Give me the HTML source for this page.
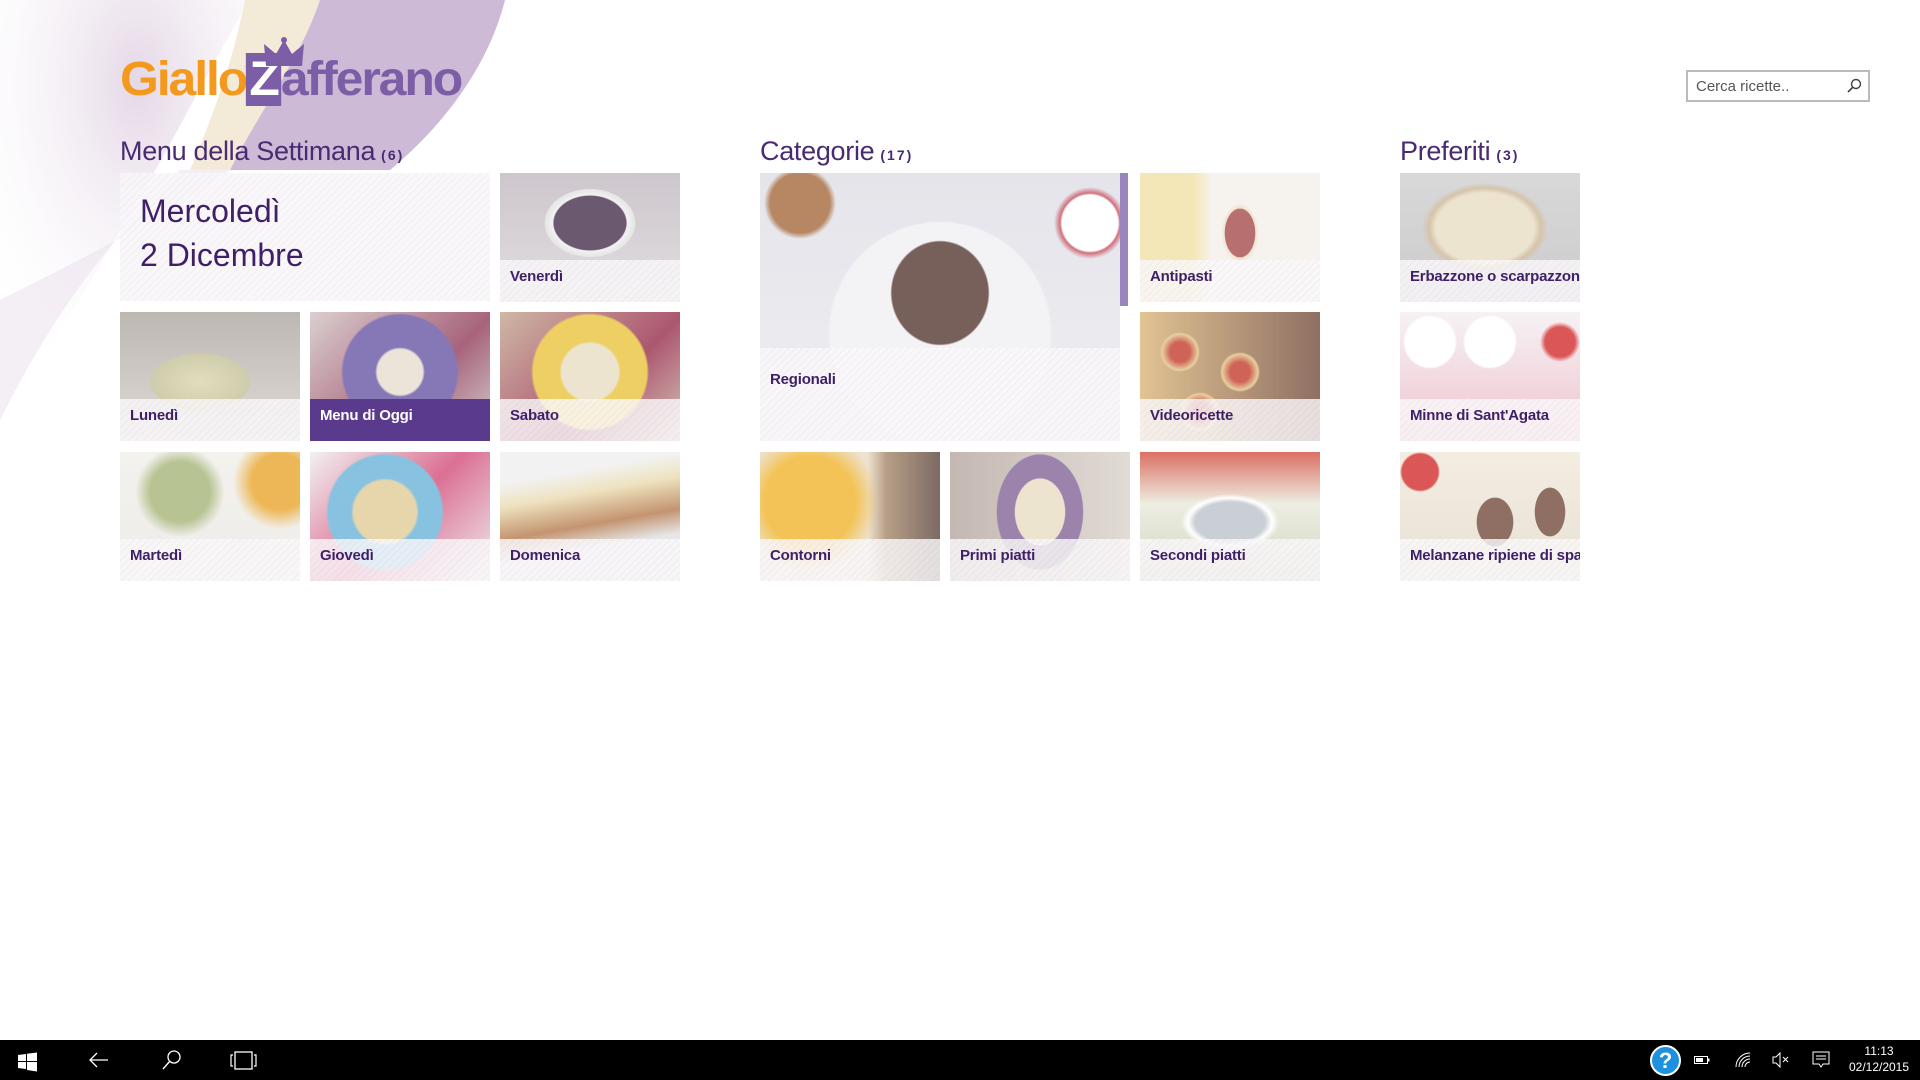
<!DOCTYPE html>
<html><head><meta charset="utf-8"><style>
*{margin:0;padding:0;box-sizing:border-box}
body{width:1920px;height:1080px;overflow:hidden;background:#fff;font-family:"Segoe UI","Liberation Sans",sans-serif;position:relative}
.bg{position:absolute;left:0;top:0;width:520px;height:440px;overflow:hidden}
.t{position:absolute;width:180px;height:129px;overflow:hidden}
.t .ph{position:absolute;inset:0;opacity:.75}
.t .band{position:absolute;left:0;right:0;bottom:0;height:42px;background:rgba(250,248,250,.82);background-image:repeating-linear-gradient(135deg,rgba(0,0,0,.035) 0 1px,transparent 1px 5px)}
.t .lb{position:absolute;left:10px;bottom:17px;font-size:15px;font-weight:bold;color:#3f1f66;font-family:"Liberation Sans",sans-serif;letter-spacing:-.2px;white-space:nowrap}
.h{position:absolute;top:136px;font-size:27px;color:#4a2a70;font-weight:300;font-family:"Liberation Sans",sans-serif;letter-spacing:-.3px}
.h small{font-size:14px;font-weight:bold;letter-spacing:2px;margin-left:6px}
.tb{position:absolute;left:0;top:1040px;width:1920px;height:40px;background:#000}
</style></head><body>
<div class="bg">
<svg width="520" height="440">
<defs><radialGradient id="g1" cx="0.55" cy="0.2" r="0.8"><stop offset="0" stop-color="#d9c6dc"/><stop offset="1" stop-color="#fff" stop-opacity="0"/></radialGradient></defs>
<path d="M0 0 L250 0 C200 80 150 200 0 420 Z" fill="url(#g1)" opacity=".7"/>
<path d="M245 0 L320 0 C300 60 260 110 230 170 L190 170 C220 100 235 50 245 0Z" fill="#f2e8d4" opacity=".9"/>
<path d="M320 0 L505 0 C490 60 450 120 390 170 L230 170 C260 110 300 60 320 0Z" fill="#c4aed0" opacity=".85"/>
<path d="M0 300 C80 260 160 220 230 170 L180 170 C120 230 60 300 0 420Z" fill="#ece2ee" opacity=".6"/>
</svg>
</div>
<!-- logo -->
<div style="position:absolute;left:120px;top:56px;font-family:'Liberation Sans',sans-serif;font-weight:bold;font-size:48px;letter-spacing:-2px;line-height:48px;transform:scaleX(1.04);transform-origin:left">
<span style="color:#f39a1e">Giallo</span><span style="color:#fff;background:#7c5ea6;padding:0 3px">Z</span><span style="color:#7c5ea6">afferano</span>
</div>
<svg style="position:absolute;left:262px;top:36px" width="44" height="32"><path d="M4 30 L2 8 L14 18 L22 4 L30 18 L42 8 L40 30Z" fill="#7c5ea6"/><circle cx="22" cy="4" r="3" fill="#7c5ea6"/></svg>
<!-- search -->
<div style="position:absolute;left:1686px;top:70px;width:184px;height:32px;border:2px solid #bbb;background:#fff">
<span style="position:absolute;left:8px;top:6px;font-size:15px;color:#555;font-family:'Liberation Sans',sans-serif">Cerca ricette..</span>
<svg style="position:absolute;right:6px;top:6px" width="16" height="16"><circle cx="10" cy="6" r="4.5" fill="none" stroke="#444" stroke-width="1.4"/><line x1="7" y1="9" x2="2" y2="14" stroke="#444" stroke-width="1.6"/></svg>
</div>
<div class="h" style="left:120px">Menu della Settimana<small>(6)</small></div>
<div class="h" style="left:760px">Categorie<small>(17)</small></div>
<div class="h" style="left:1400px">Preferiti<small>(3)</small></div>

<!-- group 1 -->
<div style="position:absolute;left:120px;top:173px;width:370px;height:128px;background:rgba(248,246,249,.9);background-image:repeating-linear-gradient(135deg,rgba(0,0,0,.03) 0 1px,transparent 1px 5px)">
<div style="position:absolute;left:20px;top:16px;font-size:32px;line-height:44px;color:#3f1f66;font-family:'Liberation Sans',sans-serif;font-weight:300">Mercoledì<br>2 Dicembre</div></div>
<div class="t" style="left:500px;top:173px"><div class="ph" style="background:radial-gradient(ellipse 60px 45px at 90px 50px,#3a2340 60%,#eee 62%,#ddd 75%,transparent 76%),linear-gradient(#bdb4bc,#d9d3d6)"></div><div class="band"></div><div class="lb">Venerdì</div></div>
<div class="t" style="left:120px;top:312px"><div class="ph" style="background:radial-gradient(ellipse 70px 40px at 80px 70px,#d8d4a8,#c0bc90 70%,transparent 72%),linear-gradient(#a8a09a,#d6d0c8)"></div><div class="band"></div><div class="lb">Lunedì</div></div>
<div class="t" style="left:310px;top:312px"><div class="ph" style="background:radial-gradient(circle at 90px 60px,#e6dccc 20%,#5e4aa0 22%,#5e4aa0 50%,transparent 52%),linear-gradient(135deg,#d0c0c0,#8a3050 60%,#c8c0c0)"></div><div class="band" style="background:#5a3a8c"></div><div class="lb" style="color:#fff">Menu di Oggi</div></div>
<div class="t" style="left:500px;top:312px"><div class="ph" style="background:radial-gradient(circle at 90px 60px,#e6dcc0 25%,#e8c030 27%,#e8c030 50%,transparent 52%),linear-gradient(135deg,#c0a088,#902040 60%,#c8b0a0)"></div><div class="band"></div><div class="lb">Sabato</div></div>
<div class="t" style="left:120px;top:452px"><div class="ph" style="background:radial-gradient(circle at 60px 40px,#a0b070 20%,transparent 30%),radial-gradient(circle at 160px 30px,#e8a020 15%,transparent 25%),linear-gradient(#f0eee8,#e8e6e0)"></div><div class="band"></div><div class="lb">Martedì</div></div>
<div class="t" style="left:310px;top:452px"><div class="ph" style="background:radial-gradient(circle at 75px 60px,#e0c890 25%,#60b0d8 27%,#60b0d8 45%,transparent 47%),linear-gradient(135deg,#eee,#d04070 50%,#e8e8e8)"></div><div class="band"></div><div class="lb">Giovedì</div></div>
<div class="t" style="left:500px;top:452px"><div class="ph" style="background:linear-gradient(170deg,#eee 20%,#e8d8a8 35%,#b07040 55%,#ddd 70%)"></div><div class="band"></div><div class="lb">Domenica</div></div>

<!-- group 2 -->
<div class="t" style="left:760px;top:173px;width:360px;height:268px"><div class="ph" style="background:radial-gradient(ellipse 80px 85px at 180px 120px,#4a2a24 60%,transparent 62%),radial-gradient(circle at 40px 30px,#a06030 30px,transparent 36px),radial-gradient(circle at 330px 50px,#fff 28px,#c04050 30px,transparent 36px),radial-gradient(circle at 180px 160px,#f0f0f4 110px,transparent 112px),linear-gradient(#dcdce4,#e8e8ee)"></div><div class="band" style="height:93px"></div><div class="lb" style="bottom:auto;top:198px">Regionali</div></div>
<div style="position:absolute;left:1120px;top:173px;width:8px;height:133px;background:#9b85bd"></div>
<div class="t" style="left:1140px;top:173px"><div class="ph" style="background:radial-gradient(ellipse 25px 40px at 100px 60px,#a04040 60%,#e8dcc0 62%,transparent 75%),linear-gradient(90deg,#f0e0a0 30%,#f4eee8 40%),linear-gradient(#fff,#e0a0b0)"></div><div class="band"></div><div class="lb">Antipasti</div></div>
<div class="t" style="left:1140px;top:312px"><div class="ph" style="background:radial-gradient(circle at 40px 40px,#c03020 10px,#e0c080 18px,transparent 20px),radial-gradient(circle at 100px 60px,#c03020 10px,#e0c080 18px,transparent 20px),radial-gradient(circle at 60px 100px,#c03020 10px,#e0c080 18px,transparent 20px),linear-gradient(90deg,#d8b070,#6a4030)"></div><div class="band"></div><div class="lb">Videoricette</div></div>
<div class="t" style="left:760px;top:452px"><div class="ph" style="background:radial-gradient(circle at 50px 50px,#f0b020 30%,transparent 45%),linear-gradient(90deg,#e8d8c0 60%,#a08060 70%,#503830)"></div><div class="band"></div><div class="lb">Contorni</div></div>
<div class="t" style="left:950px;top:452px"><div class="ph" style="background:radial-gradient(ellipse 45px 60px at 90px 60px,#e8dcc0 55%,#7a5a90 57%,#7a5a90 95%,transparent 97%),linear-gradient(90deg,#b0a098,#d8d0c8)"></div><div class="band"></div><div class="lb">Primi piatti</div></div>
<div class="t" style="left:1140px;top:452px"><div class="ph" style="background:radial-gradient(ellipse 70px 40px at 90px 70px,#b8c0c8 50%,#fff 60%,transparent 70%),linear-gradient(#d04030,#e8e8d8 40%,#c0c8b0)"></div><div class="band"></div><div class="lb">Secondi piatti</div></div>

<!-- group 3 -->
<div class="t" style="left:1400px;top:173px"><div class="ph" style="background:radial-gradient(ellipse 70px 50px at 85px 55px,#e8dcc0 70%,#c8b090 80%,transparent 90%),linear-gradient(#ccc,#bbb)"></div><div class="band"></div><div class="lb">Erbazzone o scarpazzone</div></div>
<div class="t" style="left:1400px;top:312px"><div class="ph" style="background:radial-gradient(circle at 30px 30px,#fff 25px,transparent 27px),radial-gradient(circle at 90px 30px,#fff 25px,transparent 27px),radial-gradient(circle at 160px 30px,#d02020 15px,transparent 20px),linear-gradient(#f4eef0,#e8b0c0)"></div><div class="band"></div><div class="lb">Minne di Sant'Agata</div></div>
<div class="t" style="left:1400px;top:452px"><div class="ph" style="background:radial-gradient(ellipse 30px 40px at 95px 70px,#6a4030 60%,transparent 62%),radial-gradient(ellipse 25px 40px at 150px 60px,#6a4030 60%,transparent 62%),radial-gradient(circle at 20px 20px,#d02020 18px,transparent 20px),linear-gradient(#f0e8d8,#e0d8c8)"></div><div class="band"></div><div class="lb">Melanzane ripiene di spaghetti</div></div>

<!-- taskbar -->
<div class="tb">
<svg style="position:absolute;left:18px;top:12px" width="20" height="20"><path d="M0 3 L8 2 V9 H0Z M9 1.8 L19 0.5 V9 H9Z M0 10 H8 V17 L0 16Z M9 10 H19 V19.5 L9 18Z" fill="#fff"/></svg>
<svg style="position:absolute;left:88px;top:10px" width="22" height="20"><path d="M20 10 H2 M9 3 L2 10 L9 17" stroke="#fff" stroke-width="1.3" fill="none"/></svg>
<svg style="position:absolute;left:162px;top:10px" width="20" height="20"><circle cx="12" cy="7" r="6" stroke="#fff" stroke-width="1.3" fill="none"/><line x1="8" y1="11" x2="1" y2="19" stroke="#fff" stroke-width="1.4"/></svg>
<svg style="position:absolute;left:230px;top:11px" width="28" height="20"><rect x="5" y="1" width="17" height="17" stroke="#fff" stroke-width="1.3" fill="none"/><path d="M3 4 H1 V15 H3 M24 4 H26 V15 H24" stroke="#fff" stroke-width="1.2" fill="none"/></svg>
<div style="position:absolute;left:1650px;top:5px;width:31px;height:31px;border-radius:50%;background:#1e90e0;border:2px solid #fff;color:#fff;font:bold 22px 'Liberation Sans',sans-serif;text-align:center;line-height:27px">?</div>
<svg style="position:absolute;left:1694px;top:14px" width="16" height="12"><rect x="0.5" y="2.5" width="13" height="7" stroke="#fff" fill="none"/><rect x="2" y="4" width="7" height="4" fill="#fff"/><rect x="14" y="4.5" width="1.5" height="3" fill="#fff"/></svg>
<svg style="position:absolute;left:1734px;top:11px" width="18" height="18"><path d="M2 16 A14 14 0 0 1 16 2 M5 16 A11 11 0 0 1 16 5 M8 16 A8 8 0 0 1 16 8 M11 16 A5 5 0 0 1 16 11" stroke="#fff" fill="none" stroke-width="1"/></svg>
<svg style="position:absolute;left:1772px;top:12px" width="18" height="16"><path d="M1 5 H4 L8 1 V15 L4 11 H1Z" stroke="#fff" fill="none"/><path d="M11 5 L16 10 M16 5 L11 10" stroke="#fff"/></svg>
<svg style="position:absolute;left:1812px;top:11px" width="18" height="18"><path d="M1 1 H17 V13 H11 L9 16 L7 13 H1Z M4 5 H14 M4 8 H14" stroke="#fff" fill="none"/></svg>
<div style="position:absolute;left:1838px;top:3px;width:82px;text-align:center;color:#fff;font:12px/16px 'Liberation Sans',sans-serif">11:13<br>02/12/2015</div>
</div>
</body></html>
